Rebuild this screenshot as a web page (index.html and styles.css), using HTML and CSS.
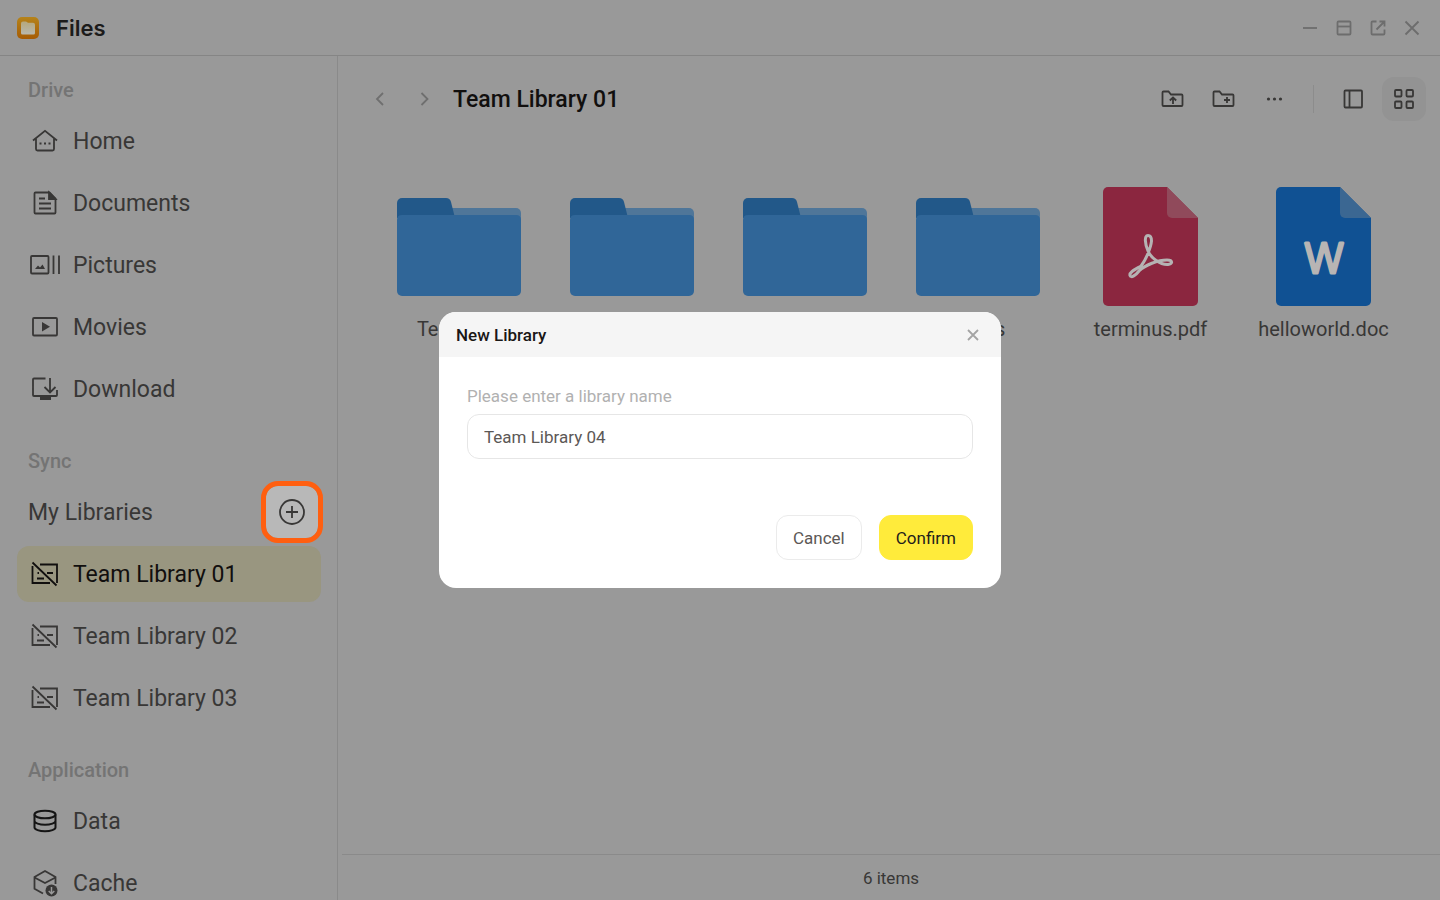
FILE: index.html
```html
<!DOCTYPE html>
<html lang="en">
<head>
<meta charset="utf-8">
<title>Files</title>
<link rel="stylesheet" href="styles.css">
</head>
<body>
<svg class="sprite" aria-hidden="true">
  <defs>
    <linearGradient id="logo-fill" x1="0" y1="0" x2="0" y2="1"><stop offset="0" stop-color="#b5831a"/><stop offset="1" stop-color="#a65c05"/></linearGradient>
    <linearGradient id="logo-paper" x1="0" y1="0" x2="0" y2="1"><stop offset="0" stop-color="#b5a87c"/><stop offset="1" stop-color="#b8b8ae"/></linearGradient>
  </defs>
  <symbol id="folder" viewBox="0 0 124 98">
    <path d="M50 10h69a5 5 0 0 1 5 5v20H50z" fill="#4f7699"/>
    <path d="M0 5a5 5 0 0 1 5-5h44q4 0 5 4l4 16H0z" fill="#225889"/>
    <path d="M0 22q0-5 5-5h114q5 0 5 5v71a5 5 0 0 1-5 5H5a5 5 0 0 1-5-5z" fill="#306698"/>
  </symbol>
  <symbol id="synclib" viewBox="0 0 30 30">
    <path d="M10 5.500h17V24M2.500 7v17H20M14 19.500H7M17 14h6M7.500 14h1.500M2.500 3.500l24 23" fill="none" stroke="currentColor" stroke-width="1.800"/>
  </symbol>
</svg>

<div class="app">
  <header class="titlebar">
    <svg class="logo" viewBox="0 0 22 22"><rect width="22" height="22" rx="5" fill="url(#logo-fill)"/><path d="M4 6.500q0-2 2-2h3l2 1.300h5q2 0 2 2V16q0 1.500-1.500 1.500h-11Q4 17.500 4 16z" fill="url(#logo-paper)"/></svg>
    <h1 class="app-name">Files</h1>
    <div class="window-controls">
      <button aria-label="Minimize"><svg viewBox="0 0 24 24"><path d="M5 12h14"/></svg></button>
      <button aria-label="Maximize"><svg viewBox="0 0 24 24"><rect x="5.500" y="5.500" width="13" height="13" rx="1"/><path d="M5.500 10.500h13"/></svg></button>
      <button aria-label="Open in new window"><svg viewBox="0 0 24 24"><path d="M10.500 5.500h-4a1 1 0 0 0-1 1v11a1 1 0 0 0 1 1h11a1 1 0 0 0 1-1v-4M13.500 5.500h5v5M18.500 5.500l-8 8"/></svg></button>
      <button aria-label="Close window"><svg viewBox="0 0 24 24"><path d="M5.500 5.500l13 13M18.500 5.500l-13 13"/></svg></button>
    </div>
  </header>

  <div class="body">
    <nav class="sidebar">
      <h2 class="section">Drive</h2>
      <ul class="list">
        <li><a class="row" href="#"><svg viewBox="0 0 30 30"><path d="M3 14.500l12-9.700 12 9.700M6 12.500V23a1.500 1.500 0 0 0 1.500 1.500h15A1.500 1.500 0 0 0 24 23V12.500"/><path d="M9.500 17.500h2M14 17.500h2M18.500 17.500h2" stroke-width="2"/></svg>Home</a></li>
        <li><a class="row" href="#"><svg viewBox="0 0 30 30"><path d="M19.500 4.500h-14a1 1 0 0 0-1 1v19a1 1 0 0 0 1 1h19a1 1 0 0 0 1-1v-14zM9 10.500h6M9 15.500h12M9 20.500h12"/><path d="M19 4.500V11h6.500z" fill="currentColor"/></svg>Documents</a></li>
        <li><a class="row" href="#"><svg viewBox="0 0 30 30"><rect x="1" y="6" width="17.500" height="17.500" rx="1"/><path d="M23.500 5.500V24M29 5.500V24"/><path d="M5 19l3-3.500 2 2 2.500-3L15 19z" fill="currentColor" stroke="none"/></svg>Pictures</a></li>
        <li><a class="row" href="#"><svg viewBox="0 0 30 30"><rect x="3" y="6" width="24" height="17.500" rx="1"/><path d="M12 10l8 4.700-8 4.800z" fill="currentColor" stroke="none"/></svg>Movies</a></li>
        <li><a class="row" href="#"><svg viewBox="0 0 30 30"><path d="M15.500 4.500H4a1 1 0 0 0-1 1v15.500a1 1 0 0 0 1 1h22a1 1 0 0 0 1-1V16M20 4v14M14.500 13l5.500 5.500 5.500-5.500"/><path d="M10 24.500h11" stroke-width="3"/></svg>Download</a></li>
      </ul>
      <h2 class="section">Sync</h2>
      <ul class="list">
        <li class="library-head"><span>My Libraries</span><button class="add" aria-label="New library"><svg viewBox="0 0 30 30"><circle cx="15" cy="15" r="12"/><path d="M9 15h12M15 9v12"/></svg></button></li>
        <li><a class="row current" href="#" aria-current="page"><svg><use href="#synclib"/></svg>Team Library 01</a></li>
        <li><a class="row" href="#"><svg><use href="#synclib"/></svg>Team Library 02</a></li>
        <li><a class="row" href="#"><svg><use href="#synclib"/></svg>Team Library 03</a></li>
      </ul>
      <h2 class="section">Application</h2>
      <ul class="list">
        <li><a class="row" href="#"><svg class="dark" viewBox="0 0 30 30"><ellipse cx="15" cy="8.500" rx="10.500" ry="3.800"/><path d="M4.500 8.500v13c0 2 4.700 3.800 10.500 3.800s10.500-1.800 10.500-3.800v-13M4.500 15c0 2 4.700 3.800 10.500 3.800s10.500-1.800 10.500-3.800"/></svg>Data</a></li>
        <li><a class="row" href="#"><svg viewBox="0 0 30 30"><path d="M13 25.500l-8.500-4.800V9L15 3l10.500 6v7M4.500 9.500L15 15l10.500-5.500"/><circle cx="21.500" cy="22.500" r="6" fill="currentColor" stroke="none"/><path d="M21.500 19v6.500M18.700 23l2.800 2.800 2.800-2.800" stroke="#999" stroke-width="1.500"/></svg>Cache</a></li>
      </ul>
    </nav>

    <main class="content">
      <div class="toolbar">
        <button class="tool muted" aria-label="Back"><svg viewBox="0 0 24 24"><path d="M15 6l-6 6 6 6"/></svg></button>
        <button class="tool muted" aria-label="Forward"><svg viewBox="0 0 24 24"><path d="M9.500 6l6 6-6 6"/></svg></button>
        <h2 class="title">Team Library 01</h2>
        <div class="tools">
          <button class="tool" aria-label="Upload"><svg viewBox="0 0 24 24"><path d="M2.500 5.500a1 1 0 0 1 1-1h5l2.500 3h10.500a1 1 0 0 1 1 1V18a1 1 0 0 1-1 1h-18a1 1 0 0 1-1-1zM13 17v-6M9.800 13.500L13 10.500l3.200 3"/></svg></button>
          <button class="tool" aria-label="New folder"><svg viewBox="0 0 24 24"><path d="M2.500 5.500a1 1 0 0 1 1-1h5l2.500 3h10.500a1 1 0 0 1 1 1V18a1 1 0 0 1-1 1h-18a1 1 0 0 1-1-1zM16 10v6M13 13h6"/></svg></button>
          <button class="tool" aria-label="More"><svg viewBox="0 0 24 24"><g fill="currentColor" stroke="none"><circle cx="6.500" cy="12" r="1.600"/><circle cx="12.500" cy="12" r="1.600"/><circle cx="18.500" cy="12" r="1.600"/></g></svg></button>
          <span class="divider"></span>
          <button class="tool" aria-label="List view"><svg viewBox="0 0 24 24"><rect x="3.500" y="3.500" width="17.500" height="17" rx="1"/><path d="M8.500 3.500v17"/></svg></button>
          <button class="tool active" aria-label="Grid view" aria-pressed="true"><svg viewBox="0 0 24 24"><rect x="3" y="3" width="6.500" height="6.500" rx="1"/><rect x="14.500" y="3" width="6.500" height="6.500" rx="1"/><rect x="3" y="14.500" width="6.500" height="6.500" rx="1"/><rect x="14.500" y="14.500" width="6.500" height="6.500" rx="1"/></svg></button>
        </div>
      </div>

      <ul class="grid">
        <li class="item"><div class="thumb"><svg class="folder"><use href="#folder"/></svg></div>Template</li>
        <li class="item"><div class="thumb"><svg class="folder"><use href="#folder"/></svg></div>Design</li>
        <li class="item"><div class="thumb"><svg class="folder"><use href="#folder"/></svg></div>Notes</li>
        <li class="item"><div class="thumb"><svg class="folder"><use href="#folder"/></svg></div>Books</li>
        <li class="item"><div class="thumb"><svg class="file" viewBox="0 0 95 119"><path d="M5 0h59l31 31v83a5 5 0 0 1-5 5H5a5 5 0 0 1-5-5V5a5 5 0 0 1 5-5z" fill="#8b263f"/><path d="M64 0l31 31H69a5 5 0 0 1-5-5z" fill="#904a5b"/><path d="M45 48.500C41 48.500 42 57 45 64C48 71 57 78 65 77.500C70 77 70 73 64 73C55 73 42 78 36 84C33 88 28 91.500 27 88.500C26 85 33 82 38 79C43 73 48 60 48.500 54C48.500 50 47.500 48.500 45 48.500Z" fill="none" stroke="#b5b3b3" stroke-width="3" stroke-linejoin="round"/></svg></div>terminus.pdf</li>
        <li class="item"><div class="thumb"><svg class="file" viewBox="0 0 95 119"><path d="M5 0h59l31 31v83a5 5 0 0 1-5 5H5a5 5 0 0 1-5-5V5a5 5 0 0 1 5-5z" fill="#105193"/><path d="M64 0l31 31H69a5 5 0 0 1-5-5z" fill="#3b6792"/><text class="mark" x="48" y="86" text-anchor="middle">W</text></svg></div>helloworld.doc</li>
      </ul>

      <footer class="status">6 items</footer>
    </main>
  </div>
</div>

<div class="overlay">
  <form class="dialog" role="dialog" aria-modal="true" aria-labelledby="dialog-title">
    <div class="dialog-head">
      <h2 class="dialog-title" id="dialog-title">New Library</h2>
      <button class="dismiss" type="button" aria-label="Close"><svg viewBox="0 0 24 24"><path d="M7 7l10 10M17 7L7 17"/></svg></button>
    </div>
    <div class="dialog-body">
      <label class="field-label" for="library-name">Please enter a library name</label>
      <input class="field" id="library-name" type="text" value="Team Library 04">
      <div class="actions">
        <button class="button" type="button">Cancel</button>
        <button class="button primary" type="submit">Confirm</button>
      </div>
    </div>
  </form>
</div>
</body>
</html>
```
FILE: styles.css
```css
* { box-sizing: border-box; }
body { margin: 0; background: #999; color: #383736; font-family: Roboto, "Liberation Sans", sans-serif; }
h1, h2, ul { margin: 0; padding: 0; }
ul { list-style: none; }
button { padding: 0; border: 0; background: none; color: inherit; font: inherit; }
svg { display: block; flex: none; fill: none; stroke: currentColor; stroke-width: 1.8; }
svg.logo, svg.folder, svg.file { stroke: none; }
.sprite { position: absolute; width: 0; height: 0; }

.app { display: flex; flex-direction: column; height: 100vh; overflow: hidden; }
.titlebar { display: flex; align-items: center; flex: none; height: 56px; padding: 0 16px 0 17px; border-bottom: 1px solid #858585; }
.logo { width: 22px; height: 22px; margin-right: 17px; }
.app-name { color: #1c1b1b; font: 600 22px/28px Inter, Roboto, sans-serif; }
.window-controls { display: flex; gap: 10px; margin-left: auto; color: #6d6d6d; }
.window-controls svg { width: 24px; height: 24px; }

.body { display: flex; flex: 1; min-height: 0; gap: 4px; }
.sidebar { flex: none; width: 338px; padding: 20px 16px 0 17px; border-right: 1px solid #8a8a8a; overflow: hidden; }
.section { padding-left: 11px; color: #747474; font-size: 20px; font-weight: 500; line-height: 28px; }
.list { display: flex; flex-direction: column; gap: 6px; padding: 9px 0 30px; }
.row { display: flex; align-items: center; gap: 13px; height: 56px; padding-left: 13px; border-radius: 12px; color: inherit; font-size: 23px; text-decoration: none; }
.row svg { width: 30px; height: 30px; }
.row.current { background: #999680; color: #110f0e; }
.row .dark { color: #151515; stroke-width: 2; }
.library-head { display: flex; align-items: center; justify-content: space-between; height: 56px; padding: 0 3px 0 11px; font-size: 23px; }
.add { display: grid; place-items: center; width: 52px; height: 52px; border-radius: 12px; outline: 5px solid #ff5f10; background: #b8b8b8; }
.add svg { width: 30px; height: 30px; }

.content { display: flex; flex-direction: column; flex: 1; min-width: 0; }
.toolbar { display: flex; align-items: center; height: 86px; padding: 0 14px 0 16px; }
.tool { display: grid; place-items: center; width: 44px; height: 44px; border-radius: 12px; }
.tool svg { width: 24px; height: 24px; }
.muted { color: #6f6f6f; }
.active { background: #939393; }
.title { margin-left: 7px; color: #110f0e; font-size: 23px; font-weight: 500; }
.tools { display: flex; align-items: center; gap: 7px; margin-left: auto; }
.divider { width: 1px; height: 28px; margin: 0 10px; background: #8c8c8c; }
.grid { display: grid; grid-template-columns: repeat(6, 1fr); padding: 45px 30px 0; }
.item { display: flex; flex-direction: column; align-items: center; gap: 9px; font-size: 20px; line-height: 28px; }
.thumb { display: grid; place-items: center; height: 119px; }
.folder { width: 124px; height: 98px; }
.file { width: 95px; height: 119px; }
.mark { fill: #b8b5b4; stroke: #b8b5b4; stroke-width: 3; stroke-linejoin: round; font: 300 41px Inter, sans-serif; }
.status { margin-top: auto; height: 46px; border-top: 1px solid #8a8a8a; font-size: 17px; line-height: 46px; text-align: center; }

.overlay { position: fixed; inset: 0; display: grid; place-items: center; }
.dialog { width: 562px; max-width: 100%; border-radius: 17px; background: #fff; overflow: hidden; font-size: 17px; }
.dialog-head { display: flex; align-items: center; justify-content: space-between; height: 45px; padding: 0 16px 0 17px; background: #f5f5f5; }
.dialog-title { color: #1a1716; font-size: 17px; font-weight: 500; }
.dismiss { color: #a3a3a3; }
.dismiss svg { width: 24px; height: 24px; }
.dialog-body { padding: 28px; }
.field-label { display: block; margin-bottom: 6px; color: #b1b1b1; line-height: 23px; }
.field { display: block; width: 100%; height: 45px; padding: 0 16px; border: 1px solid #e6e6e6; border-radius: 12px; background: #fff; color: #5c5856; font: inherit; outline: 0; }
.actions { display: flex; justify-content: flex-end; gap: 17px; margin-top: 56px; }
.button { height: 45px; padding: 0 16px; border: 1px solid #ebebeb; border-radius: 12px; background: #fff; color: #5c5856; }
.primary { border-color: #ffeb3b; background: #ffeb3b; color: #1f1d1c; }
```
